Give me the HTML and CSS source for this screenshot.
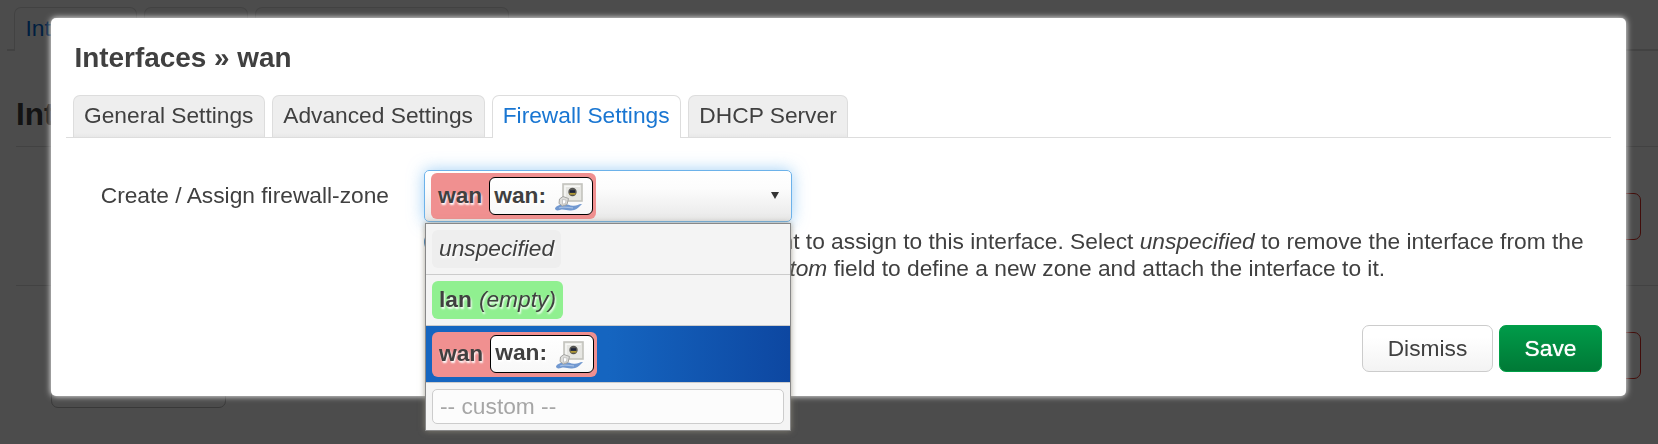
FILE: index.html
```html
<!DOCTYPE html>
<html lang="en">
<head>
<meta charset="utf-8">
<title>Interfaces</title>
<link rel="stylesheet" href="styles.css">
</head>
<body>
<svg width="0" height="0" class="defs">
  <symbol id="port" viewBox="0 0 28 28">
    <rect x="8" y="1" width="19" height="17" fill="#e6e6e2" stroke="#c3c3bd" stroke-width="1.600"/>
    <path d="M10 16V3.300H25" fill="none" stroke="#f8f8f6" stroke-width="1.500"/>
    <circle cx="17.500" cy="9" r="4.200" fill="#555552"/>
    <path d="M14.500 10.800h6" stroke="#b39b35" stroke-width="1.800"/>
    <path d="M15 8.500h5" stroke="#1b2238" stroke-width="2.500"/>
    <path d="M27 21c-3-.5-5 2.200-9 1.800-4-.6-6-2-10-1.500-4 .6-7 2-8 4 0 2 2 2.700 5 1.700 4-1.300 7 1 11 .5 5-.5 7-2.500 8.500-4z" fill="#7198d0"/>
    <path d="M4 25c4-2 9 0 14-.2" fill="none" stroke="#a3bee4" stroke-width="1.200"/>
    <path d="M4.500 16l3.500-2.500 5.500 2-1.500 6-4.500 1.500-3.500-2.500z" fill="#dededc" stroke="#a4a4a2"/>
    <path d="M7.500 16.500l3.500.5-.5 3.500-3 .8z" fill="#fff" stroke="#b5b5b5" stroke-width=".7"/>
  </symbol>
</svg>

<main class="page">
  <ul class="page-tabs"><li class="on">Interfaces</li><li></li><li class="wide"></li></ul>
  <h2>Interfaces</h2>
  <div class="row first"><span class="danger"></span></div>
  <div class="row second"><span class="danger"></span></div>
  <div class="add"></div>
</main>

<div class="overlay">
  <section class="modal">
    <h4>Interfaces » wan</h4>
    <ul class="tabs">
      <li>General Settings</li>
      <li>Advanced Settings</li>
      <li class="active">Firewall Settings</li>
      <li>DHCP Server</li>
    </ul>
    <div class="field">
      <label>Create / Assign firewall-zone</label>
      <div class="control">
        <div class="select">
          <span class="zone wan"><b>wan</b><span class="iface"><b>wan:</b><svg><use href="#port"/></svg></span></span>
          <svg class="caret" viewBox="0 0 8 7"><path d="M0 0h8L4 7z"/></svg>
          <div class="menu">
            <div class="item"><span class="zone none"><em>unspecified</em></span></div>
            <div class="item"><span class="zone lan"><b>lan</b><em>(empty)</em></span></div>
            <div class="item selected"><span class="zone wan"><b>wan</b><span class="iface"><b>wan:</b><svg><use href="#port"/></svg></span></span></div>
            <div class="item custom"><input placeholder="-- custom --"></div>
          </div>
        </div>
        <div class="help">
          <i class="hint"></i>
          <p>Choose the firewall zone you want to assign to this interface. Select <em>unspecified</em> to remove the interface from the associated zone or fill out the <em>custom</em> field to define a new zone and attach the interface to it.</p>
        </div>
      </div>
    </div>
    <div class="actions"><button>Dismiss</button><button class="save">Save</button></div>
  </section>
</div>
</body>
</html>
```
FILE: styles.css
```css
* { box-sizing: border-box; }
html, body { height: 100%; margin: 0; overflow: hidden; }
body {
  font: 22.75px/27px "Liberation Sans", Arial, sans-serif;
  color: #404040;
  background: #fff;
}
ul { list-style: none; margin: 0; padding: 0; display: flex; }
h2, h4, p { margin: 0; }
.defs { position: absolute; }

/* Page behind the dialog */
.page { padding-top: 7px; }
.page-tabs {
  height: 44px;
  margin-left: 7px;
  padding-left: 7px;
  gap: 7px;
  border-bottom: 2px solid #ddd;
}
.page-tabs li {
  width: 104px;
  height: 42px;
  border: 1px solid #ddd;
  border-bottom: 0;
  border-radius: 7px 7px 0 0;
  background: #f8f8f8;
}
.page-tabs .on {
  width: 123px;
  height: 44px;
  padding: 7px 10.5px;
  color: #0069d6;
  background: #fff;
}
.page-tabs .wide { width: 254px; }
h2 {
  height: 96px;
  margin-left: 16px;
  padding-top: 43px;
  font-size: 31.5px;
  line-height: 40px;
  border-bottom: 1px solid #ddd;
}
.row {
  display: flex;
  justify-content: flex-end;
  margin-left: 16px;
  padding: 46px 17px 0 0;
  height: 139px;
  border-bottom: 1px solid #ddd;
}
.row.second { border: 0; height: 95px; }
.danger {
  width: 60px;
  height: 47px;
  border: 1px solid #d92b20;
  border-radius: 7px;
}
.add {
  width: 175px;
  height: 27px;
  margin-left: 51px;
  border: 1px solid #bbb;
  border-radius: 7px;
}

/* Dialog */
.overlay {
  position: fixed;
  inset: 0;
  padding: 18px 32px 48px 51px;
  background: rgba(0, 0, 0, .7);
}
.modal {
  display: flex;
  flex-direction: column;
  height: 378px;
  padding: 0 15px;
  background: #fff;
  border-radius: 5px;
  box-shadow: 0 0 6px #fff;
}
h4 {
  height: 77px;
  padding: 21px 0 0 8.5px;
  font-size: 27.9px;
  line-height: 38px;
}
.tabs {
  height: 43px;
  padding-left: 7px;
  gap: 7px;
  border-bottom: 1px solid #ddd;
}
.tabs li {
  height: 42px;
  padding: 6px 10.75px 6px 10px;
  border: 1px solid #ddd;
  border-bottom: 0;
  border-radius: 7px 7px 0 0;
  background: linear-gradient(#eee 90%, #e8e8e8);
}
.tabs .active { height: 43px; color: #1976d2; background: #fff; }
.field { display: flex; gap: 35px; padding-top: 32px; height: 187px; }
.field label {
  width: 323px;
  padding-top: 12px;
  text-align: right;
  white-space: nowrap;
}
.control { flex: 1; }
.select {
  position: relative;
  display: flex;
  align-items: center;
  justify-content: space-between;
  width: 368px;
  height: 52px;
  padding: 0 12px 0 6px;
  border: 1px solid #6cb2ea;
  border-radius: 5px;
  background: linear-gradient(#fff, #fcfcfc 35%, #e8e8e8);
  box-shadow: 0 0 16px rgba(82, 168, 236, .55);
}
.caret { width: 8px; height: 7px; margin-top: -2px; fill: #333; }
.zone {
  display: inline-flex;
  align-items: center;
  height: 38px;
  padding: 0 7px;
  border-radius: 6px;
  text-shadow: 1px 2px 2px #fff;
}
.zone b, .zone em { padding-bottom: 2px; }
.zone.none { background: #eee; padding-right: 7px; }
.zone.lan { background: #90f090; gap: 7px; }
.zone.wan { height: 46px; padding-right: 3px; background: #f09090; gap: 7px; }
.item .zone.wan { height: 45px; }
.iface {
  display: flex;
  align-items: center;
  width: 104px;
  height: 38px;
  padding-left: 4px;
  gap: 9px;
  border: 1px solid #000;
  border-radius: 6px;
  background: linear-gradient(#fff, #f8f8f8);
}
.item .iface { margin-top: -1px; }
.iface svg { width: 28px; height: 28px; margin-top: 2px; }
.menu {
  position: absolute;
  z-index: 2;
  left: 0;
  top: 52px;
  width: 366px;
  height: 208px;
  border: 1px solid #888;
  background: #f4f4f4;
  box-shadow: 0 0 6px rgba(145, 140, 125, .8);
}
.item {
  display: flex;
  align-items: center;
  height: 51px;
  padding: 0 6px;
  border-bottom: 1px solid #ccc;
}
.item.selected {
  height: 57px;
  background: linear-gradient(90deg, #1565c0 50%, #0d47a1);
}
.item.custom { height: 47px; border: 0; }
.item input {
  width: 100%;
  height: 35px;
  padding: 0 7px;
  font: inherit;
  border: 1px solid #ccc;
  border-radius: 5px;
  background: #fcfcfc;
}
.item input::placeholder { color: #a6a6a6; }
.help { display: flex; padding-top: 6px; }
.help p { flex: 1; }
.hint {
  flex: none;
  width: 24px;
  height: 24px;
  margin: 2px 5px 0 0;
  border-radius: 12px;
  background: #3479b8;
}
.actions { display: flex; justify-content: flex-end; gap: 6px; padding-right: 9px; }
button {
  width: 131px;
  height: 47px;
  padding: 0 0 1px;
  font: inherit;
  color: #404040;
  border: 1px solid #ccc;
  border-radius: 7px;
  background: linear-gradient(#fff 25%, #f3f3f3);
}
.save {
  width: 103px;
  color: #fff;
  text-shadow: 0 0 1px #fff;
  border-color: #00a047;
  background: linear-gradient(#009b49, #007936);
}
```
